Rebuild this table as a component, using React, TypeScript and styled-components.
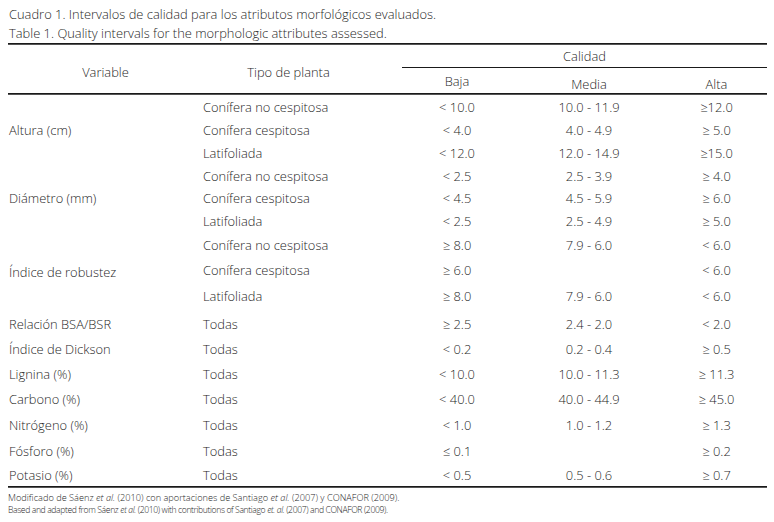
import React from "react";
import styled, { createGlobalStyle } from "styled-components";

const GlobalStyle = createGlobalStyle`
  html, body { margin: 0; padding: 0; background: #ffffff; }
  body {
    font-family: "Open Sans", "Noto Sans", "Liberation Sans", sans-serif;
    font-weight: 300;
    color: #1f1f1f;
  }
`;

const COLS = "195px 199px 110px 154px 101px";

const Page = styled.div`
  width: 759px;
  padding: 5px 0 0 8px;
`;

const Caption = styled.div`
  font-size: 12.9px;
  line-height: 19px;
  padding-left: 1px;
  white-space: nowrap;
`;

const Rule = styled.div`
  height: 1px;
  background: #1a1a1a;
  border-bottom: 0.5px solid #555;
`;

const HeaderGrid = styled.div`
  display: grid;
  grid-template-columns: ${COLS};
  grid-template-rows: 22px 1px 25px;
  font-size: 12.9px;
`;

const HeadCell = styled.div<{ $col: string; $row: string; $pt?: number; $pr?: number }>`
  grid-column: ${(p) => p.$col};
  grid-row: ${(p) => p.$row};
  display: flex;
  align-items: center;
  justify-content: center;
  padding-top: ${(p) => p.$pt ?? 0}px;
  padding-right: ${(p) => p.$pr ?? 0}px;
  white-space: nowrap;
`;

const SubRule = styled.div`
  grid-column: 3 / 6;
  grid-row: 2;
  background: #1a1a1a;
`;

const Row = styled.div<{ $h: number }>`
  display: grid;
  grid-template-columns: ${COLS};
  height: ${(p) => p.$h}px;
  align-items: center;
  font-size: 12.9px;
  white-space: nowrap;
`;

const VarCell = styled.div<{ $dy?: number }>`
  padding-left: 1px;
  transform: translateY(${(p) => p.$dy ?? 0}px);
`;

const TypeCell = styled.div`
  padding-left: 0;
`;

const ValCell = styled.div`
  text-align: center;
`;

const Footnotes = styled.div`
  padding-top: 4px;
  line-height: 12px;
  white-space: nowrap;
`;

const Note = styled.div<{ $condensed?: boolean }>`
  font-size: ${(p) => (p.$condensed ? 8.6 : 9.2)}px;
  letter-spacing: ${(p) => (p.$condensed ? -0.38 : 0)}px;
`;

type R = { v?: string; t: string; b: string; m: string; a: string; h: number; dy?: number };

const rows: R[] = [
  { t: "Conífera no cespitosa", b: "< 10.0", m: "10.0 - 11.9", a: "≥12.0", h: 23 },
  { v: "Altura (cm)", t: "Conífera cespitosa", b: "< 4.0", m: "4.0 - 4.9", a: "≥ 5.0", h: 23 },
  { t: "Latifoliada", b: "< 12.0", m: "12.0 - 14.9", a: "≥15.0", h: 23 },
  { t: "Conífera no cespitosa", b: "< 2.5", m: "2.5 - 3.9", a: "≥ 4.0", h: 23 },
  { v: "Diámetro (mm)", t: "Conífera cespitosa", b: "< 4.5", m: "4.5 - 5.9", a: "≥ 6.0", h: 22 },
  { t: "Latifoliada", b: "< 2.5", m: "2.5 - 4.9", a: "≥ 5.0", h: 24 },
  { t: "Conífera no cespitosa", b: "≥ 8.0", m: "7.9 - 6.0", a: "< 6.0", h: 24 },
  { v: "Índice de robustez", t: "Conífera cespitosa", b: "≥ 6.0", m: "", a: "< 6.0", h: 25, dy: 2 },
  { t: "Latifoliada", b: "≥ 8.0", m: "7.9 - 6.0", a: "< 6.0", h: 28 },
  { v: "Relación BSA/BSR", t: "Todas", b: "≥ 2.5", m: "2.4 - 2.0", a: "< 2.0", h: 27 },
  { v: "Índice de Dickson", t: "Todas", b: "< 0.2", m: "0.2 - 0.4", a: "≥ 0.5", h: 24 },
  { v: "Lignina (%)", t: "Todas", b: "< 10.0", m: "10.0 - 11.3", a: "≥ 11.3", h: 25 },
  { v: "Carbono (%)", t: "Todas", b: "< 40.0", m: "40.0 - 44.9", a: "≥ 45.0", h: 26 },
  { v: "Nitrógeno (%)", t: "Todas", b: "< 1.0", m: "1.0 - 1.2", a: "≥ 1.3", h: 26 },
  { v: "Fósforo (%)", t: "Todas", b: "≤ 0.1", m: "", a: "≥ 0.2", h: 25 },
  { v: "Potasio (%)", t: "Todas", b: "< 0.5", m: "0.5 - 0.6", a: "≥ 0.7", h: 23 },
];

export default function App() {
  return (
    <>
      <GlobalStyle />
      <Page>
        <Caption>
          <div>Cuadro 1. Intervalos de calidad para los atributos morfológicos evaluados.</div>
          <div>Table 1. Quality intervals for the morphologic attributes assessed.</div>
        </Caption>
        <Rule />
        <HeaderGrid>
          <HeadCell $col="1" $row="1 / 4" $pt={6}>Variable</HeadCell>
          <HeadCell $col="2" $row="1 / 4" $pt={6} $pr={28}>Tipo de planta</HeadCell>
          <HeadCell $col="3 / 6" $row="1">Calidad</HeadCell>
          <SubRule />
          <HeadCell $col="3" $row="3" $pt={0}>Baja</HeadCell>
          <HeadCell $col="4" $row="3" $pt={6}>Media</HeadCell>
          <HeadCell $col="5" $row="3" $pt={6}>Alta</HeadCell>
        </HeaderGrid>
        <Rule />
        {rows.map((r, i) => (
          <Row key={i} $h={r.h}>
            <VarCell $dy={r.dy}>{r.v ?? ""}</VarCell>
            <TypeCell>{r.t}</TypeCell>
            <ValCell>{r.b}</ValCell>
            <ValCell>{r.m}</ValCell>
            <ValCell>{r.a}</ValCell>
          </Row>
        ))}
        <Rule />
        <Footnotes>
          <Note>
            Modificado de Sáenz <i>et al.</i> (2010) con aportaciones de Santiago <i>et al.</i> (2007) y CONAFOR (2009).
          </Note>
          <Note $condensed>
            Based and adapted from Sáenz <i>et al.</i> (2010) with contributions of Santiago <i>et. al.</i> (2007) and CONAFOR (2009).
          </Note>
        </Footnotes>
      </Page>
    </>
  );
}
